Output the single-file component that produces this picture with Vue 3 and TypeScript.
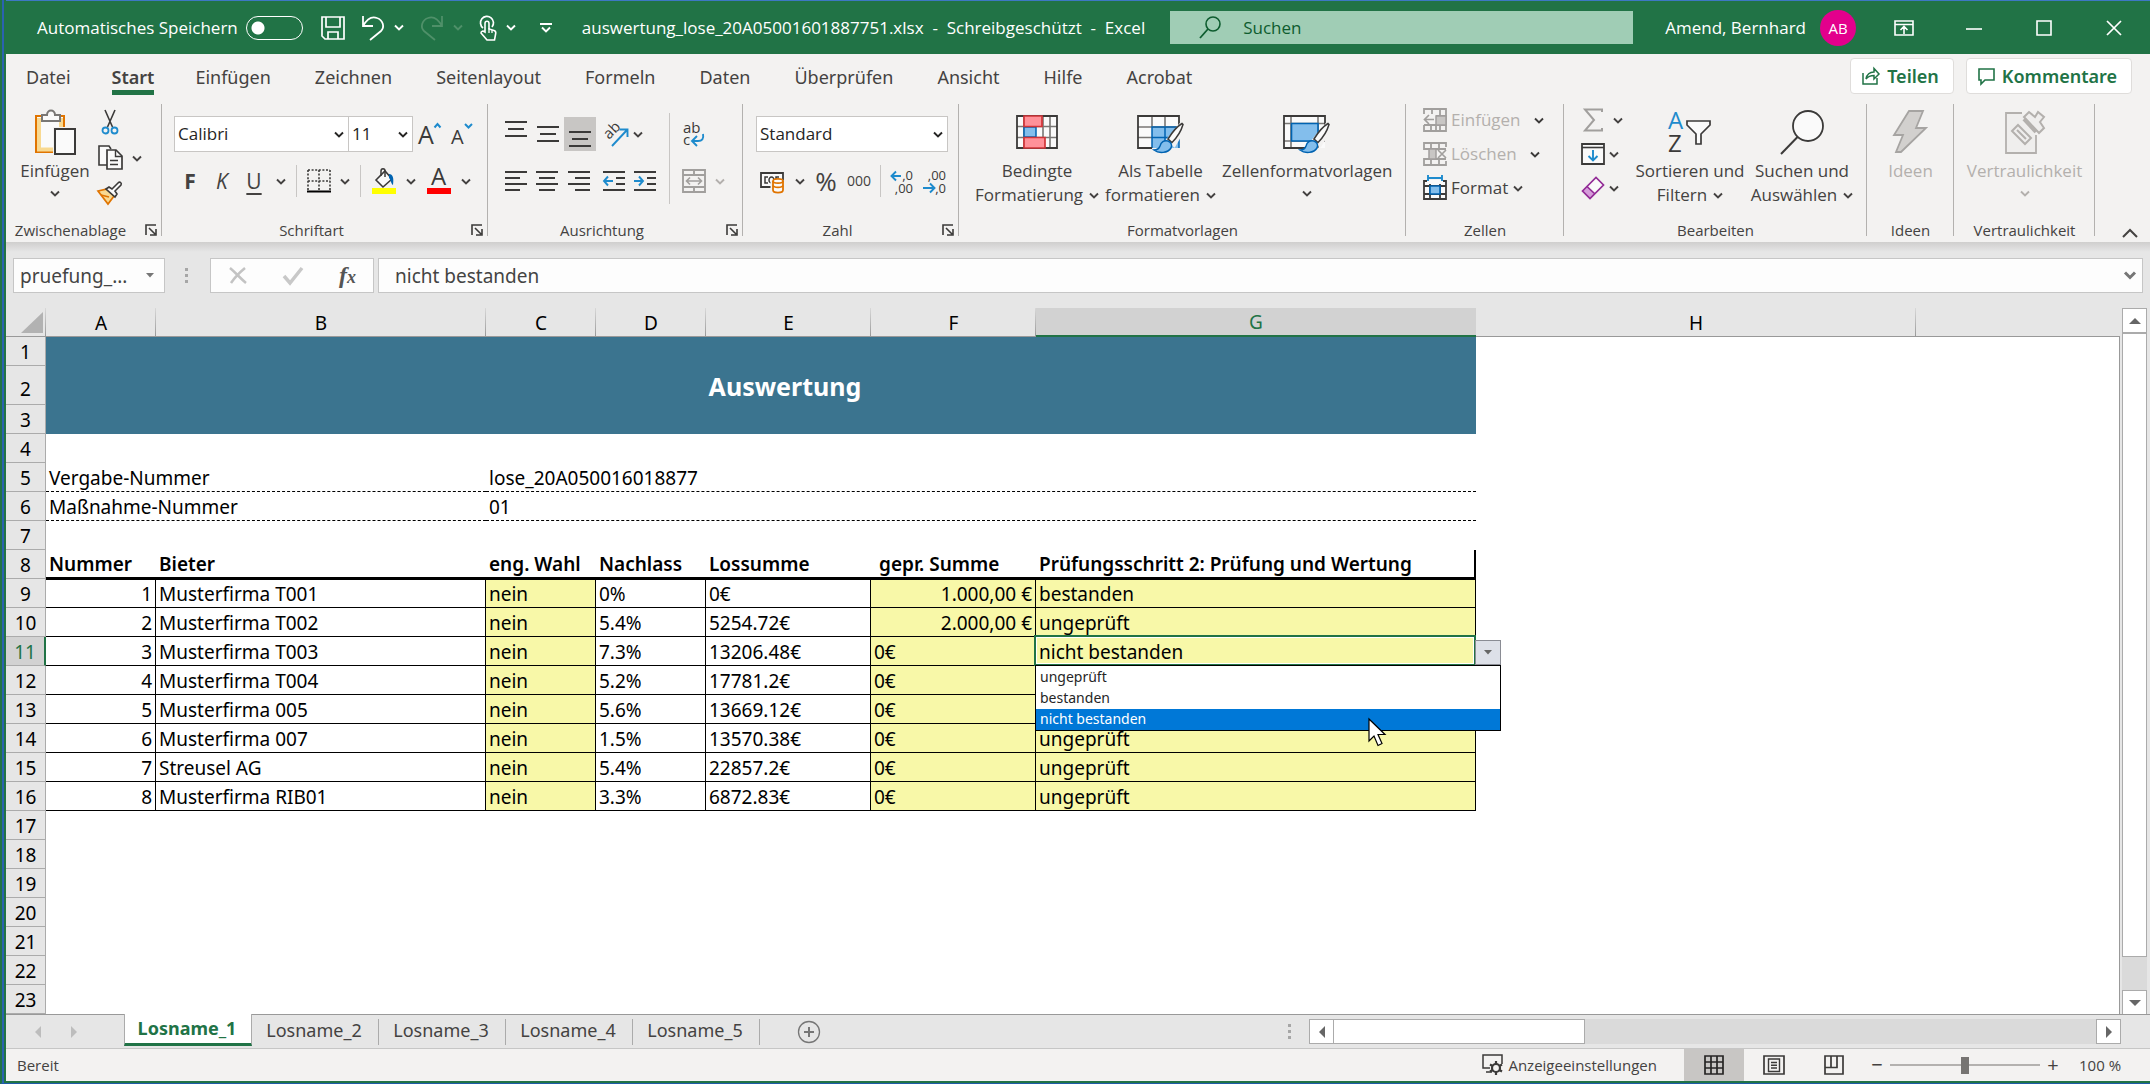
<script setup lang="ts">
import { h, ref, type FunctionalComponent } from 'vue'

type IconDef = [width: number, height: number, markup: string]

const brush = `
  <path d="M46 12L32 29l5 4 11-19z" fill="none" stroke="#f3f2f1" stroke-width="5"/>
  <path d="M45 12.500c-5 3-10 9-14 15.500l4 3.500c5-5 9-11 11-18z" fill="#fafafa" stroke="#3b3a39" stroke-width="1.500"/>
  <path d="M31 30c-4-1-7 1-8 5-1 3-3 4-6 4 5 4 14 3 17-2 1.500-3 0-6-3-7z" fill="#83beec" stroke="#0063b1" stroke-width="1.500"/>`

const icons: Record<string, IconDef> = {
  chevron: [10, 7, `<path d="M1 1.500l4 4 4-4" fill="none" stroke="currentColor" stroke-width="1.900"/>`],
  chevronUp: [16, 10, `<path d="M1 9l7-7 7 7" fill="none" stroke="currentColor" stroke-width="2"/>`],
  chevronBold: [12, 9, `<path d="M1 1.500l5 5 5-5" fill="none" stroke="currentColor" stroke-width="3"/>`],
  launcher: [12, 12, `<path d="M1 11V1h10M4 4l6 6M11 5v6H5" fill="none" stroke="#3b3a39" stroke-width="1.600"/>`],
  save: [24, 24, `<path d="M1 1h22v22H4l-3-3zM5 1v10h14V1M7 23v-7h10v7" fill="none" stroke="#fff" stroke-width="1.700"/>`],
  undo: [24, 26, `<path d="M2 1v10h10M2 11C6 4 11 1 16 3c6 2 8 9 4 13L9 25" fill="none" stroke="#fff" stroke-width="1.800"/>`],
  redo: [24, 26, `<path d="M22 1v10H12M22 11C18 4 13 1 8 3c-6 2-8 9-4 13l11 9" fill="none" stroke="#4f9069" stroke-width="1.800"/>`],
  touch: [18, 26, `<path d="M4 13A6.500 6.500 0 1 1 13 12" fill="none" stroke="#fff" stroke-width="1.700"/><path d="M6 17V8.500c0-3 4-3 4 0V14l5 1.500c1.500.5 2 1.500 1.700 3L15.500 25H8l-6-7c0-2 2-2.500 4-1z" fill="#217346" stroke="#fff" stroke-width="1.600"/><path d="M10 13v5M13 15v3" stroke="#fff" stroke-width="1.300"/>`],
  customize: [12, 10, `<path d="M0 1h12" stroke="#fff" stroke-width="2"/><path d="M2 4.500l4 4 4-4" fill="none" stroke="#fff" stroke-width="1.900"/>`],
  search: [22, 24, `<circle cx="14" cy="8" r="7" fill="none" stroke="#0e5c2f" stroke-width="1.600"/><path d="M9 13L1 22" stroke="#0e5c2f" stroke-width="1.800"/>`],
  ribbonOptions: [20, 16, `<path d="M1 1h18v14H1zM1 4.500h18M10 14V7M6.500 10L10 6.500l3.500 3.500" fill="none" stroke="#fff" stroke-width="1.600"/>`],
  minimize: [16, 16, `<path d="M0 9h16" stroke="#fff" stroke-width="1.600"/>`],
  maximize: [16, 16, `<path d="M1 1h14v14H1z" fill="none" stroke="#fff" stroke-width="1.600"/>`],
  close: [16, 16, `<path d="M1 1l14 14M15 1L1 15" stroke="#fff" stroke-width="1.700"/>`],
  share: [18, 18, `<path d="M1 6v11h14v-6M4 12c1-5 4-7 8-7V1.500L17 7l-5 5V8.500c-4 0-6 1-8 3.500z" fill="none" stroke="#217346" stroke-width="1.500"/>`],
  comment: [17, 17, `<path d="M1 1h15v11H7l-4 4v-4H1z" fill="none" stroke="#217346" stroke-width="1.600"/>`],
  paste: [44, 46, `<path d="M3 7h28v36H3z" fill="#fafafa" stroke="#e07400" stroke-width="2"/><path d="M6 9v31.500h22V9" fill="none" stroke="#f8d991" stroke-width="4"/><path d="M9 12V6h5c0-6 8-6 8 0h5v6z" fill="#fafafa" stroke="#797775" stroke-width="2"/><path d="M20 18h23v28H20z" fill="#f3f2f1"/><path d="M22 20h20v25H22z" fill="#fafafa" stroke="#3b3a39" stroke-width="2"/>`],
  cut: [18, 26, `<path d="M4 1l7.500 17M14 1L6.500 18" stroke="#3b3a39" stroke-width="1.600"/><circle cx="4.500" cy="21.500" r="3" fill="none" stroke="#1e8bcd" stroke-width="1.800"/><circle cx="13.500" cy="21.500" r="3" fill="none" stroke="#1e8bcd" stroke-width="1.800"/>`],
  copy: [26, 26, `<path d="M10 20H2V1h10l2 3" fill="#fafafa" stroke="#3b3a39" stroke-width="1.600"/><path d="M10 5h9l6 6v13H10z" fill="#fafafa" stroke="#3b3a39" stroke-width="1.700"/><path d="M18.500 5v6.500H25M13 15.500h8M13 19.500h8" fill="none" stroke="#3b3a39" stroke-width="1.400"/>`],
  painter: [26, 24, `<path d="M1 10l9-2 7 7-6 8z" fill="#f8d991" stroke="#e07400" stroke-width="1.700"/><path d="M4 14l8 2" stroke="#e07400" stroke-width="1.500"/><path d="M9 8l3-2 3 2 6-6c2-2 4 0 3 2l-6 6 2 3-2 3z" fill="#fafafa" stroke="#3b3a39" stroke-width="1.600"/>`],
  grow: [24, 26, `<text x="0" y="23" font-family="Open Sans, sans-serif" font-size="25" fill="#3b3a39">A</text><path d="M16.500 6.500l3-3.500 3 3.500" fill="none" stroke="#1e8bcd" stroke-width="2"/>`],
  shrink: [24, 26, `<text x="1" y="23" font-family="Open Sans, sans-serif" font-size="20" fill="#3b3a39">A</text><path d="M15 3l3.500 3.500L22 3" fill="none" stroke="#1e8bcd" stroke-width="2"/>`],
  borders: [24, 24, `<path d="M1 1h22M1 12h22M1 1v21M12 1v21M23 1v21" fill="none" stroke="#3b3a39" stroke-width="1.600" stroke-dasharray="2 1.600"/><path d="M0 22.500h24" stroke="#000" stroke-width="2"/>`],
  fill: [26, 26, `<path d="M5 12l9-9 7 8-9 8z" fill="#fafafa" stroke="#3b3a39" stroke-width="1.600"/><path d="M10 8V3c0-3 4-3 4 0v6" fill="none" stroke="#3b3a39" stroke-width="1.500"/><path d="M18 6c4 0 5 4 4 11-2-1-2-5-4-7z" fill="#0063b1"/><path d="M1 20h24v6H1z" fill="#ff0"/>`],
  fontColor: [26, 26, `<text x="5" y="17" font-family="Open Sans, sans-serif" font-size="24" fill="#3b3a39">A</text><path d="M1 20h24v6H1z" fill="red"/>`],
  top: [22, 20, `<path d="M0 3h22M3 10h16M0 17h22" stroke="#3b3a39" stroke-width="2"/>`],
  left: [22, 22, `<path d="M0 2h22M0 8h15M0 14h22M0 20h15" stroke="#3b3a39" stroke-width="1.800"/>`],
  center: [22, 22, `<path d="M0 2h22M3 8h16M0 14h22M3 20h16" stroke="#3b3a39" stroke-width="1.800"/>`],
  right: [22, 22, `<path d="M0 2h22M7 8h15M0 14h22M7 20h15" stroke="#3b3a39" stroke-width="1.800"/>`],
  outdent: [22, 22, `<path d="M0 2h22M13 8h9M13 14h9M0 20h22" stroke="#3b3a39" stroke-width="1.800"/><path d="M10 11H1M5 6.500L1 11l4 4.500" fill="none" stroke="#1e8bcd" stroke-width="1.900"/>`],
  indent: [22, 22, `<path d="M0 2h22M13 8h9M13 14h9M0 20h22" stroke="#3b3a39" stroke-width="1.800"/><path d="M0 11h9M5 6.500L9 11l-4 4.500" fill="none" stroke="#1e8bcd" stroke-width="1.900"/>`],
  orient: [26, 26, `<text transform="translate(6 19) rotate(-45)" font-family="Open Sans, sans-serif" font-size="15" fill="#3b3a39">ab</text><path d="M9 25L24 9M16.500 8.500H24.500V16" fill="none" stroke="#1e8bcd" stroke-width="1.900"/>`],
  wrap: [24, 28, `<text x="1" y="13" font-family="Open Sans, sans-serif" font-size="15" fill="#3b3a39">ab</text><text x="1" y="25" font-family="Open Sans, sans-serif" font-size="15" fill="#3b3a39">c</text><path d="M21 14c1 5-1 7-5 7h-5M15 16l-5 5 5 5" fill="none" stroke="#1e8bcd" stroke-width="1.900"/>`],
  merge: [24, 24, `<path d="M1 1h22v22H1zM1 6h22M1 18h22M12 1v5M12 18v5" fill="none" stroke="#a19f9d" stroke-width="1.900"/><path d="M4 12h16M8 8.500L4.500 12 8 15.500M16 8.500l3.500 3.500-3.500 3.500" fill="none" stroke="#a19f9d" stroke-width="1.600"/>`],
  money: [26, 26, `<path d="M1 5h22v14H1z" fill="#fafafa" stroke="#3b3a39" stroke-width="1.800"/><path d="M8 9H5v6h3M14 12a2.500 3 0 1 0-5 0 2.500 3 0 1 0 5 0M16 15V9h3" fill="none" stroke="#3b3a39" stroke-width="1.500"/><path d="M12 14h12v10H12z" fill="#fafafa" stroke="#f3f2f1" stroke-width="3"/><path d="M13 13v9c0 3.500 10 3.500 10 0v-9" fill="#fafafa" stroke="#e07400" stroke-width="1.800"/><ellipse cx="18" cy="13" rx="5" ry="2.200" fill="#fafafa" stroke="#e07400" stroke-width="1.700"/><path d="M13 17.500c1 2.500 9 2.500 10 0" fill="none" stroke="#e07400" stroke-width="1.700"/>`],
  moreDecimals: [24, 26, `<text x="23" y="12" text-anchor="end" font-family="Open Sans, sans-serif" font-size="13" fill="#3b3a39">,0</text><text x="23" y="25" text-anchor="end" font-family="Open Sans, sans-serif" font-size="13" fill="#3b3a39">,00</text><path d="M11 8H1M6 3.500L1.500 8 6 12.500" fill="none" stroke="#1e8bcd" stroke-width="1.900"/>`],
  lessDecimals: [24, 26, `<text x="23" y="12" text-anchor="end" font-family="Open Sans, sans-serif" font-size="13" fill="#3b3a39">,00</text><text x="23" y="25" text-anchor="end" font-family="Open Sans, sans-serif" font-size="13" fill="#3b3a39">,0</text><path d="M0 20h11M7 15.500l4.500 4.500L7 24.500" fill="none" stroke="#1e8bcd" stroke-width="1.900"/>`],
  conditional: [42, 42, `<path d="M1 5h40v32H1z" fill="#fafafa"/><path d="M1 15.500h40M1 26.500h40M8 5v32M27 5v32M34 5v32" stroke="#797775" stroke-width="1.600"/><path d="M1 5h40v32H1z" fill="none" stroke="#3b3a39" stroke-width="1.800"/><path d="M8 16h12v10H8z" fill="#83beec" stroke="#0063b1" stroke-width="1.500"/><path d="M8 5h18v10.500H8zM8 26.500h21V37H8z" fill="#ff9199" stroke="#d13438" stroke-width="1.700"/>`],
  tableFormat: [48, 42, `<path d="M1 5h41v32H1z" fill="#fafafa"/><path d="M15 16h27v21H15z" fill="#83beec"/><path d="M1 16h41M1 26.500h14M15 5v11M28 5v11" stroke="#797775" stroke-width="1.600"/><path d="M15 37V16h27v21M15 26.500h27M28 16v21" fill="none" stroke="#0063b1" stroke-width="1.500"/><path d="M15 37H1V5h41v11" fill="none" stroke="#3b3a39" stroke-width="1.800"/>${brush}`],
  cellFormat: [48, 42, `<path d="M1 5h41v32H1z" fill="#fafafa"/><path d="M1 12.500h41M1 30h41M8 5v32M35 5v32" stroke="#797775" stroke-width="1.600"/><path d="M22 37H1V5h41v9" fill="none" stroke="#3b3a39" stroke-width="1.800"/><path d="M8.500 12.500H35V30H8.500z" fill="#83beec" stroke="#0063b1" stroke-width="1.600"/>${brush}`],
  insertCells: [24, 24, `<path d="M6 1h17v22H1v-6M1 6V1h6M1 17h22M13 8h10M13 17v6M17 1v22M8 17v6M9 1v5" fill="none" stroke="#a19f9d" stroke-width="1.800"/><path d="M13 8h10v9H13z" fill="#c8c6c4" stroke="#a19f9d" stroke-width="1.500"/><path d="M11 11.500H2M6 7l-4.500 4.500L6 16" fill="none" stroke="#a19f9d" stroke-width="1.700"/>`],
  deleteCells: [24, 24, `<path d="M23 5V1H1v6h22M23 19v4H1v-6h22M8 1v6M16 1v6M8 17v6M16 17v6" fill="none" stroke="#a19f9d" stroke-width="1.800"/><path d="M6 7h7v10H6z" fill="#c8c6c4" stroke="#a19f9d" stroke-width="1.500"/><path d="M15 8l8 8M23 8l-8 8" stroke="#a19f9d" stroke-width="1.700"/>`],
  formatCells: [24, 26, `<path d="M1 5h22v19H1z" fill="#fafafa"/><path d="M4 6H1v18h22V6h-3M1 11h22M1 19h22M7 9v15M17 9v15" fill="none" stroke="#3b3a39" stroke-width="1.800"/><path d="M7 11h10v8H7z" fill="#83beec" stroke="#0063b1" stroke-width="1.600"/><path d="M5 3h14M5 0v6M19 0v6" stroke="#1e8bcd" stroke-width="1.900"/>`],
  sum: [24, 24, `<path d="M21 4V1.500H4L13 12 4 22.500h17V20" fill="none" stroke="#a19f9d" stroke-width="2"/>`],
  fillDown: [24, 24, `<path d="M1 2h22v20H1z" fill="#fafafa" stroke="#3b3a39" stroke-width="1.800"/><path d="M1 5.500h22" stroke="#3b3a39" stroke-width="1.600"/><path d="M12 8v10.500M7.500 14l4.500 4.500 4.500-4.500" fill="none" stroke="#1e8bcd" stroke-width="1.900"/>`],
  eraser: [24, 24, `<path d="M1 15L15 1l8 8L9 23z" fill="#fafafa"/><path d="M1 15l5-5 8 8-5 5z" fill="#d59dda"/><path d="M1.500 15L15 1.500l7.500 7.500L9 22.500zM6 10.500l8 7.500" fill="none" stroke="#922b96" stroke-width="1.700"/>`],
  sort: [44, 48, `<text x="0" y="21" font-family="Open Sans, sans-serif" font-size="24" fill="#1e8bcd">A</text><text x="0" y="44" font-family="Open Sans, sans-serif" font-size="24" fill="#3b3a39">Z</text><path d="M19 13h23v4L33 26v10h-5V26l-9-9z" fill="#fafafa" stroke="#3b3a39" stroke-width="1.700"/>`],
  find: [44, 48, `<circle cx="28" cy="18" r="15" fill="#fafafa" stroke="#3b3a39" stroke-width="1.800"/><path d="M17.500 29L1 46" stroke="#3b3a39" stroke-width="2"/>`],
  ideas: [34, 48, `<path d="M16 3h14l-7 17h10L8 44h-5l7-17H1z" fill="#d2d0ce" stroke="#a6a4a2" stroke-width="1.800"/>`],
  sensitivity: [42, 48, `<path d="M18 5H2v40h30V27" fill="#efeeed" stroke="#b3b0ad" stroke-width="1.800"/><path d="M8 23l6-6 13 13-6 6zM13 22l9 9" fill="#efeeed" stroke="#b3b0ad" stroke-width="2"/><path d="M20 9l5-5 6 5 3-5 6 5-4 5 4 6-5 5z" fill="#efeeed" stroke="#b3b0ad" stroke-width="2"/><path d="M20 11l12 13" stroke="#b3b0ad" stroke-width="4"/>`],
  cancel: [18, 18, `<path d="M1 1c6 5 10 10 16 15M16 1C10 6 6 10 2 16" fill="none" stroke="#c3c3c3" stroke-width="2.500"/>`],
  accept: [20, 18, `<path d="M1 9l6 7L19 1" fill="none" stroke="#c8c8c8" stroke-width="3.500"/>`],
  dots: [4, 16, `<path d="M0 0h3v3H0zM0 6h3v3H0zM0 12h3v3H0z" fill="#a6a6a6"/>`],
  corner: [22, 22, `<path d="M22 0v21H0z" fill="#b2b2b2"/>`],
  arrowLeft: [8, 12, `<path d="M7 0v12L1 6z" fill="currentColor"/>`],
  arrowRight: [8, 12, `<path d="M1 0v12l6-6z" fill="currentColor"/>`],
  arrowUp: [12, 8, `<path d="M0 7h12L6 1z" fill="currentColor"/>`],
  arrowDown: [12, 8, `<path d="M0 1h12L6 7z" fill="currentColor"/>`],
  arrowSmall: [8, 5, `<path d="M0 0h8L4 4.500z" fill="currentColor"/>`],
  addSheet: [24, 24, `<circle cx="12" cy="12" r="10.500" fill="none" stroke="#767676" stroke-width="1.300"/><path d="M12 7v10M7 12h10" stroke="#767676" stroke-width="2"/>`],
  display: [22, 22, `<path d="M8 14H1V1h19v9M4 18h6" fill="none" stroke="#3b3a39" stroke-width="1.500"/><circle cx="14" cy="14" r="4" fill="none" stroke="#3b3a39" stroke-width="2.200"/><path d="M14 7v3M14 18v3M8 10.500l3 1.700M17 15.700l3 1.800M8 17.500l3-1.800M17 12.200l3-1.700" stroke="#3b3a39" stroke-width="2.200"/>`],
  normalView: [20, 20, `<path d="M1 1h18v18H1zM1 7h18M1 13h18M7 1v18M13 1v18" fill="none" stroke="#262524" stroke-width="1.700"/>`],
  pageView: [22, 20, `<path d="M1 1h20v18H1z" fill="none" stroke="#3b3a39" stroke-width="1.700"/><path d="M5.500 4h11v12.500h-11zM8 7.500h6M8 10.300h6M8 13h6" fill="none" stroke="#3b3a39" stroke-width="1.400"/>`],
  breakView: [20, 20, `<path d="M1 1h18v18H1zM1 12.500h12V1M7 1v11" fill="none" stroke="#3b3a39" stroke-width="1.700"/>`],
  cursor: [20, 30, `<path d="M1 1v22l5-5 4 9.500 4-2-4-9h7z" fill="#fff" stroke="#000" stroke-width="1.200"/>`],
}

const Icon: FunctionalComponent<{ name: string }> = (props) => {
  const [width, height, markup] = icons[props.name]
  return h('svg', {
    class: 'icon',
    width,
    height,
    viewBox: `0 0 ${width} ${height}`,
    'aria-hidden': 'true',
    innerHTML: markup,
  })
}
Icon.props = ['name']

const docTitle = 'auswertung_lose_20A05001601887751.xlsx  -  Schreibgeschützt  -  Excel'
const ribbonTabs = ['Datei', 'Start', 'Einfügen', 'Zeichnen', 'Seitenlayout', 'Formeln', 'Daten', 'Überprüfen', 'Ansicht', 'Hilfe', 'Acrobat']
const activeTab = ref('Start')

const columns = ['A', 'B', 'C', 'D', 'E', 'F', 'G', 'H']
const statusOptions = ['ungeprüft', 'bestanden', 'nicht bestanden']
const picked = ref('nicht bestanden')

interface Bid {
  row: number
  name: string
  rebate: string
  total: string
  checked: string
  status: string
}

const bids: Bid[] = [
  { row: 9, name: 'Musterfirma T001', rebate: '0%', total: '0€', checked: '1.000,00 €', status: 'bestanden' },
  { row: 10, name: 'Musterfirma T002', rebate: '5.4%', total: '5254.72€', checked: '2.000,00 €', status: 'ungeprüft' },
  { row: 11, name: 'Musterfirma T003', rebate: '7.3%', total: '13206.48€', checked: '0€', status: 'nicht bestanden' },
  { row: 12, name: 'Musterfirma T004', rebate: '5.2%', total: '17781.2€', checked: '0€', status: 'ungeprüft' },
  { row: 13, name: 'Musterfirma 005', rebate: '5.6%', total: '13669.12€', checked: '0€', status: 'ungeprüft' },
  { row: 14, name: 'Musterfirma 007', rebate: '1.5%', total: '13570.38€', checked: '0€', status: 'ungeprüft' },
  { row: 15, name: 'Streusel AG', rebate: '5.4%', total: '22857.2€', checked: '0€', status: 'ungeprüft' },
  { row: 16, name: 'Musterfirma RIB01', rebate: '3.3%', total: '6872.83€', checked: '0€', status: 'ungeprüft' },
]
const emptyRows = [17, 18, 19, 20, 21, 22, 23]

const sheets = ['Losname_1', 'Losname_2', 'Losname_3', 'Losname_4', 'Losname_5']
const activeSheet = ref('Losname_1')
const zoom = ref(50)
</script>

<template>
  <div class="window">
    <header class="titlebar">
      <label class="autosave">Automatisches Speichern <input type="checkbox" class="toggle" /></label>
      <div class="quick">
        <button aria-label="Speichern"><Icon name="save" /></button>
        <button class="pair" aria-label="Rückgängig"><Icon name="undo" /><Icon name="chevron" /></button>
        <button class="pair dim" aria-label="Wiederholen"><Icon name="redo" /><Icon name="chevron" /></button>
        <button class="pair" aria-label="Fingereingabe"><Icon name="touch" /><Icon name="chevron" /></button>
        <button aria-label="Symbolleiste anpassen"><Icon name="customize" /></button>
      </div>
      <div class="doc-title">{{ docTitle }}</div>
      <label class="search"><Icon name="search" /><input type="search" placeholder="Suchen" aria-label="Suchen" /></label>
      <div class="user">Amend, Bernhard <span class="avatar">AB</span></div>
      <div class="window-buttons">
        <button aria-label="Menüband-Optionen"><Icon name="ribbonOptions" /></button>
        <button aria-label="Minimieren"><Icon name="minimize" /></button>
        <button aria-label="Maximieren"><Icon name="maximize" /></button>
        <button aria-label="Schließen"><Icon name="close" /></button>
      </div>
    </header>

    <nav class="tabs">
      <button v-for="tab in ribbonTabs" :key="tab" class="tab" :class="{ active: tab === activeTab }" @click="activeTab = tab">{{ tab }}</button>
      <div class="tab-actions">
        <button class="action"><Icon name="share" />Teilen</button>
        <button class="action"><Icon name="comment" />Kommentare</button>
      </div>
    </nav>

    <div class="ribbon">
      <section class="group clipboard">
        <div class="body">
          <button class="big"><Icon name="paste" /><span>Einfügen</span><Icon name="chevron" /></button>
          <div class="clip-col">
            <button aria-label="Ausschneiden"><Icon name="cut" /></button>
            <button class="pair" aria-label="Kopieren"><Icon name="copy" /><Icon name="chevron" /></button>
            <button aria-label="Format übertragen"><Icon name="painter" /></button>
          </div>
        </div>
        <footer class="with-launch">Zwischenablage<button class="launch" aria-label="Zwischenablage öffnen"><Icon name="launcher" /></button></footer>
      </section>

      <section class="group font">
        <div class="body rows">
          <div class="line">
            <span class="combo font-name"><select aria-label="Schriftart"><option>Calibri</option></select><Icon name="chevron" /></span>
            <span class="combo font-size"><select aria-label="Schriftgrad"><option>11</option></select><Icon name="chevron" /></span>
            <button class="grow" aria-label="Schrift vergrößern"><Icon name="grow" /></button>
            <button class="shrink" aria-label="Schrift verkleinern"><Icon name="shrink" /></button>
          </div>
          <div class="line styles">
            <button class="glyph bold">F</button>
            <button class="glyph italic">K</button>
            <button class="pair wide"><span class="glyph underline">U</span><Icon name="chevron" /></button>
            <i class="bar" />
            <button class="pair" aria-label="Rahmen"><Icon name="borders" /><Icon name="chevron" /></button>
            <i class="bar" />
            <button class="pair" aria-label="Füllfarbe"><Icon name="fill" /><Icon name="chevron" /></button>
            <button class="pair" aria-label="Schriftfarbe"><Icon name="fontColor" /><Icon name="chevron" /></button>
          </div>
        </div>
        <footer class="with-launch">Schriftart<button class="launch" aria-label="Schriftart öffnen"><Icon name="launcher" /></button></footer>
      </section>

      <section class="group align">
        <div class="body">
          <div class="rows align-rows">
            <div class="line">
              <button class="cell" aria-label="Oben"><Icon name="top" class="raised" /></button>
              <button class="cell" aria-label="Mitte"><Icon name="top" /></button>
              <button class="cell on" aria-label="Unten"><Icon name="top" class="lowered" /></button>
              <button class="pair orient" aria-label="Ausrichtung"><Icon name="orient" /><Icon name="chevron" /></button>
            </div>
            <div class="line">
              <button class="cell" aria-label="Linksbündig"><Icon name="left" /></button>
              <button class="cell" aria-label="Zentriert"><Icon name="center" /></button>
              <button class="cell" aria-label="Rechtsbündig"><Icon name="right" /></button>
              <button class="cell shift" aria-label="Einzug verkleinern"><Icon name="outdent" /></button>
              <button class="cell" aria-label="Einzug vergrößern"><Icon name="indent" /></button>
            </div>
          </div>
          <i class="tall-bar" />
          <div class="rows">
            <div class="line"><button aria-label="Textumbruch"><Icon name="wrap" /></button></div>
            <div class="line"><button class="pair faded" aria-label="Verbinden"><Icon name="merge" /><Icon name="chevron" /></button></div>
          </div>
        </div>
        <footer class="with-launch">Ausrichtung<button class="launch" aria-label="Ausrichtung öffnen"><Icon name="launcher" /></button></footer>
      </section>

      <section class="group number">
        <div class="body rows">
          <div class="line">
            <span class="combo format"><select aria-label="Zahlenformat"><option>Standard</option></select><Icon name="chevron" /></span>
          </div>
          <div class="line numbers">
            <button class="pair" aria-label="Buchhaltung"><Icon name="money" /><Icon name="chevron" /></button>
            <button class="percent">%</button>
            <button class="thousand">000</button>
            <i class="bar" />
            <button aria-label="Dezimalstelle hinzufügen"><Icon name="moreDecimals" /></button>
            <button aria-label="Dezimalstelle entfernen"><Icon name="lessDecimals" /></button>
          </div>
        </div>
        <footer class="with-launch">Zahl<button class="launch" aria-label="Zahl öffnen"><Icon name="launcher" /></button></footer>
      </section>

      <section class="group formats">
        <div class="body">
          <button class="big"><Icon name="conditional" /><span>Bedingte</span><span>Formatierung <Icon name="chevron" /></span></button>
          <button class="big"><Icon name="tableFormat" /><span>Als Tabelle</span><span>formatieren <Icon name="chevron" /></span></button>
          <button class="big"><Icon name="cellFormat" /><span>Zellenformatvorlagen</span><Icon name="chevron" /></button>
        </div>
        <footer>Formatvorlagen</footer>
      </section>

      <section class="group cells">
        <div class="body stack">
          <button class="small off"><Icon name="insertCells" />Einfügen<Icon name="chevron" class="far" /></button>
          <button class="small off"><Icon name="deleteCells" />Löschen<Icon name="chevron" class="far" /></button>
          <button class="small"><Icon name="formatCells" />Format<Icon name="chevron" /></button>
        </div>
        <footer>Zellen</footer>
      </section>

      <section class="group edit">
        <div class="body">
          <div class="stack">
            <button class="small sum" aria-label="Summe"><Icon name="sum" /><Icon name="chevron" /></button>
            <button class="small" aria-label="Ausfüllen"><Icon name="fillDown" /><Icon name="chevron" /></button>
            <button class="small" aria-label="Löschen"><Icon name="eraser" /><Icon name="chevron" /></button>
          </div>
          <button class="big"><Icon name="sort" /><span>Sortieren und</span><span>Filtern <Icon name="chevron" /></span></button>
          <button class="big"><Icon name="find" /><span>Suchen und</span><span>Auswählen <Icon name="chevron" /></span></button>
        </div>
        <footer>Bearbeiten</footer>
      </section>

      <section class="group ideas">
        <div class="body"><button class="big off"><Icon name="ideas" /><span>Ideen</span></button></div>
        <footer>Ideen</footer>
      </section>

      <section class="group secrecy">
        <div class="body"><button class="big off"><Icon name="sensitivity" /><span>Vertraulichkeit</span><Icon name="chevron" /></button></div>
        <footer>Vertraulichkeit</footer>
      </section>

      <button class="collapse" aria-label="Menüband reduzieren"><Icon name="chevronUp" /></button>
    </div>

    <div class="formula-bar">
      <div class="box name-box"><input value="pruefung_..." aria-label="Namenfeld" /><Icon name="arrowSmall" /></div>
      <Icon name="dots" class="grip" />
      <div class="box fx">
        <button aria-label="Abbrechen"><Icon name="cancel" /></button>
        <button aria-label="Eingeben"><Icon name="accept" /></button>
        <button class="fx-btn"><span>f</span><small>x</small></button>
      </div>
      <div class="box formula"><input :value="picked" aria-label="Bearbeitungsleiste" /><Icon name="chevronBold" /></div>
    </div>

    <div class="sheet-area">
      <div class="sheet">
        <table>
          <colgroup>
            <col class="w-head" /><col class="w-s" /><col class="w-b" /><col class="w-s" /><col class="w-s" />
            <col class="w-m" /><col class="w-m" /><col class="w-l" /><col class="w-l" /><col />
          </colgroup>
          <thead>
            <tr>
              <th class="corner"><Icon name="corner" /></th>
              <th v-for="c in columns" :key="c" :class="{ sel: c === 'G' }">{{ c }}</th>
              <th class="rest" />
            </tr>
          </thead>
          <tbody>
            <tr><th>1</th><td colspan="7" rowspan="3" class="heading">Auswertung</td><td colspan="2" /></tr>
            <tr class="high"><th>2</th><td colspan="2" /></tr>
            <tr><th>3</th><td colspan="2" /></tr>
            <tr><th>4</th><td colspan="9" /></tr>
            <tr class="meta"><th>5</th><td colspan="2">Vergabe-Nummer</td><td colspan="5">lose_20A050016018877</td><td colspan="2" /></tr>
            <tr class="meta"><th>6</th><td colspan="2">Maßnahme-Nummer</td><td colspan="5">01</td><td colspan="2" /></tr>
            <tr><th>7</th><td colspan="9" /></tr>
            <tr class="labels">
              <th>8</th><td>Nummer</td><td>Bieter</td><td>eng. Wahl</td><td>Nachlass</td><td>Lossumme</td>
              <td class="indent">gepr. Summe</td><td class="last">Prüfungsschritt 2: Prüfung und Wertung</td><td colspan="2" />
            </tr>
            <tr v-for="(bid, i) in bids" :key="bid.row" class="bid" :class="{ first: i === 0 }">
              <th :class="{ sel: bid.row === 11 }">{{ bid.row }}</th>
              <td class="num">{{ i + 1 }}</td>
              <td>{{ bid.name }}</td>
              <td class="mark">nein</td>
              <td>{{ bid.rebate }}</td>
              <td>{{ bid.total }}</td>
              <td class="mark" :class="{ num: i < 2 }">{{ bid.checked }}</td>
              <td v-if="bid.row === 11" class="mark current">
                {{ picked }}
                <button class="open" aria-label="Auswahl öffnen"><Icon name="arrowSmall" /></button>
                <select v-model="picked" class="list" size="3" aria-label="Prüfungsergebnis">
                  <option v-for="o in statusOptions" :key="o">{{ o }}</option>
                </select>
                <Icon name="cursor" class="cursor" />
              </td>
              <td v-else class="mark">{{ bid.status }}</td>
              <td colspan="2" class="free" />
            </tr>
            <tr v-for="n in emptyRows" :key="n"><th>{{ n }}</th><td colspan="9" /></tr>
          </tbody>
        </table>
      </div>
      <div class="vscroll">
        <button aria-label="Nach oben"><Icon name="arrowUp" /></button>
        <div class="vtrack"><div class="vthumb" /></div>
        <button aria-label="Nach unten"><Icon name="arrowDown" /></button>
      </div>
    </div>

    <div class="sheet-bar">
      <div class="sheet-nav"><Icon name="arrowLeft" /><Icon name="arrowRight" /></div>
      <button v-for="s in sheets" :key="s" class="sheet-tab" :class="{ active: s === activeSheet }" @click="activeSheet = s">{{ s }}</button>
      <button class="add" aria-label="Neues Blatt"><Icon name="addSheet" /></button>
      <Icon name="dots" class="splitter" />
      <div class="hscroll">
        <button aria-label="Nach links"><Icon name="arrowLeft" /></button>
        <div class="htrack"><div class="hthumb" /></div>
        <button aria-label="Nach rechts"><Icon name="arrowRight" /></button>
      </div>
    </div>

    <footer class="status">
      <span class="ready">Bereit</span>
      <button class="display"><Icon name="display" />Anzeigeeinstellungen</button>
      <button class="view on" aria-label="Normal"><Icon name="normalView" /></button>
      <button class="view" aria-label="Seitenlayout"><Icon name="pageView" /></button>
      <button class="view" aria-label="Umbruchvorschau"><Icon name="breakView" /></button>
      <button class="step">−</button>
      <input v-model="zoom" type="range" class="zoom" aria-label="Zoom" />
      <button class="step">+</button>
      <span class="percent-label">100 %</span>
    </footer>
  </div>
</template>

<style>
body {
  margin: 0;
  background: #fff;
}
</style>

<style scoped>
.window {
  --ink: #444241;
  --green: #217346;
  display: flex;
  flex-direction: column;
  min-height: 100vh;
  box-sizing: border-box;
  border-left: 2px solid var(--green);
  border-bottom: 1px solid #1f5ca8;
  box-shadow: inset 2px 0 #2b62b0, inset 4px 0 var(--green), inset 0 -2px var(--green);
  padding: 0 0 2px 4px;
  background: #e6e6e6;
  color: var(--ink);
  font: 17px/24px "Open Sans", "Noto Sans", sans-serif;
  overflow-x: hidden;
}
button {
  display: flex;
  align-items: center;
  justify-content: center;
  padding: 0;
  border: 0;
  background: none;
  color: inherit;
  font: inherit;
  white-space: nowrap;
}
.icon { display: block; flex: none; overflow: visible; }
input, select {
  box-sizing: border-box;
  border: 0;
  padding: 0;
  background: none;
  color: inherit;
  font: inherit;
  outline: 0;
}

/* title bar */
.titlebar {
  display: flex;
  align-items: center;
  height: 54px;
  box-sizing: border-box;
  padding: 0 1px 0 31px;
  border-top: 1px solid #3d78c4;
  background: var(--green);
  color: #fff;
}
.autosave { display: flex; align-items: center; gap: 8px; white-space: nowrap; }
.toggle {
  appearance: none;
  width: 57px;
  height: 24px;
  margin: 0;
  border: 1px solid #fff;
  border-radius: 12px;
  background: radial-gradient(circle at 11px 11px, #fff 6px, transparent 7px);
}
.quick { display: flex; align-items: center; gap: 16px; margin-left: 18px; }
.pair { gap: 9px; }
.dim { color: #4f9069; }
.quick > :last-child { margin-left: 8px; }
.doc-title { margin-left: 30px; white-space: pre; }
.search {
  display: flex;
  flex: 1;
  align-items: center;
  gap: 22px;
  height: 33px;
  margin-left: 25px;
  padding-left: 29px;
  background: #a0cdb5;
  color: #0e5c2f;
}
.search input { flex: 1; min-width: 0; appearance: none; }
.search input::placeholder { color: #0e5c2f; opacity: 1; }
.user { display: flex; align-items: center; gap: 14px; margin-left: 32px; white-space: nowrap; }
.avatar {
  width: 36px;
  height: 36px;
  border-radius: 50%;
  background: #e3008c;
  font-size: 15px;
  line-height: 36px;
  text-align: center;
}
.window-buttons { display: flex; margin-left: 13px; }
.window-buttons button { width: 70px; height: 40px; }

/* ribbon tabs */
.tabs {
  display: flex;
  align-items: center;
  gap: 44px;
  height: 50px;
  padding: 0 18px 0 20px;
  background: #f3f2f1;
  font: 18px/24px "Noto Sans", "Open Sans", sans-serif;
}
.tab { height: 32px; border-bottom: 5px solid transparent; }
.tab:nth-child(-n+2) { margin-right: -3px; }
.tab.active { border-color: var(--green); font-weight: 600; }
.tab-actions { display: flex; gap: 12px; margin-left: auto; }
.action {
  gap: 7px;
  height: 36px;
  padding: 0 14px 0 11px;
  border: 1px solid #dfdddb;
  border-radius: 4px;
  background: #fff;
  color: var(--green);
  font-weight: 600;
  margin-top: -6px;
}

/* ribbon groups */
.ribbon { display: flex; height: 138px; background: #f3f2f1; }
.group { position: relative; display: flex; flex: none; flex-direction: column; }
.group::after {
  content: "";
  position: absolute;
  top: 0;
  right: 0;
  bottom: 6px;
  width: 1px;
  background: #b3b1af;
}
.body { display: flex; box-sizing: border-box; height: 115px; }
.group footer { position: relative; font-size: 15px; line-height: 22px; text-align: center; }
.group .with-launch { padding-right: 27px; }
.launch { position: absolute; right: 5px; top: 5px; }
.clipboard { width: 156px; }
.font { width: 326px; }
.align { width: 255px; }
.number { width: 216px; }
.formats { width: 447px; }
.cells { width: 158px; }
.edit { width: 303px; }
.ideas { width: 87px; }
.secrecy { width: 141px; }
.big { flex-direction: column; justify-content: flex-start; padding-top: 4px; }
.big > .icon:first-child { height: 48px; margin-bottom: 3px; }
.big > span { display: flex; align-items: center; gap: 6px; }
.big > .icon:last-child { margin-top: 7px; }
.off { color: #b3b0ad; }
.clipboard .big { width: 98px; }
.clip-col { display: flex; flex-direction: column; align-items: flex-start; gap: 10px; padding-top: 5px; margin-left: -7px; }
.clip-col button:first-child { margin-left: 4px; }
.rows { display: flex; flex-direction: column; gap: 11px; padding-top: 12px; }
.line { display: flex; align-items: center; height: 36px; }
.combo { display: flex; position: relative; align-items: center; box-sizing: border-box; height: 36px; border: 1px solid #c8c6c4; background: #fff; color: #262524; }
.combo select { appearance: none; width: 100%; height: 34px; padding-left: 3px; }
.combo .icon { position: absolute; right: 4px; pointer-events: none; }
.font .body { padding-left: 12px; }
.font-name { width: 175px; }
.font-size { width: 64px; border-left: 0; }
.grow { margin-left: 5px; }
.shrink { margin-left: 8px; }
.styles { padding-left: 7px; gap: 10px; }
.glyph { width: 18px; font-size: 21px; }
.bold { font-weight: 700; }
.italic { margin-left: 4px; font-style: italic; }
.underline { text-decoration: underline; text-underline-offset: 4px; }
.wide { margin-left: 4px; gap: 13px; }
.bar { width: 1px; height: 32px; background: #c8c6c4; }
.align .body { padding-left: 12px; }
.cell { width: 32px; height: 34px; }
.on { background: #c8c6c4; }
.raised { margin-bottom: 10px; }
.lowered { margin-top: 10px; }
.shift { margin-left: 3px; }
.orient { margin-left: 7px; gap: 4px; }
.tall-bar { flex: none; width: 1px; height: 91px; margin: 9px 12px 0 8px; background: #c8c6c4; }
.align-rows { flex: none; width: 161px; }
.faded { color: #b3b0ad; }
.number .body { padding-left: 13px; }
.format { width: 192px; }
.numbers { gap: 9px; padding-left: 4px; }
.percent { width: 24px; font-size: 26px; }
.thousand { width: 24px; font-size: 14px; }
.formats .body { gap: 6px; padding-left: 16px; }
.stack { display: flex; flex-direction: column; gap: 8px; padding-top: 3px; }
.small { height: 26px; justify-content: flex-start; gap: 5px; }
.small .icon:first-child { margin-right: -1px; }
.small.sum { gap: 9px; }
.far { margin-left: 8px; }
.off .icon.far { color: #3b3a39; }
.cells .body { padding-left: 17px; }
.edit .body { padding-left: 17px; }
.edit .stack { width: 54px; }
.edit .big { width: 110px; margin-right: 2px; }
.ideas .body, .secrecy .body { justify-content: center; }
.collapse { margin: 124px 12px 4px auto; height: 10px; }

/* formula bar */
.formula-bar {
  display: flex;
  box-sizing: border-box;
  height: 51px;
  padding: 16px 7px 0;
  background: linear-gradient(#cfcecd, #e6e6e6 10px);
  font: 19px/24px "Noto Sans", "Open Sans", sans-serif;
}
.box { display: flex; align-items: center; box-sizing: border-box; height: 35px; border: 1px solid #c6c6c6; background: #fdfdfd; }
.name-box { width: 152px; padding: 0 10px 0 6px; color: #767676; }
.name-box input { flex: 1; min-width: 0; color: #444; }
.grip { margin: 10px 21px 0 20px; }
.fx { width: 164px; justify-content: space-between; padding: 0 17px 0 18px; }
.fx-btn { align-items: baseline; color: #555; font: italic bold 24px/30px "Liberation Serif", serif; }
.fx-btn small { font-size: 18px; }
.formula { flex: 1; margin-left: 4px; padding: 0 6px 0 16px; color: #767676; }
.formula input { flex: 1; color: #444; }

/* worksheet */
.sheet-area { display: flex; padding-top: 15px; padding-right: 3px; gap: 2px; }
.sheet { flex: 1; min-width: 0; }
table {
  width: 100%;
  table-layout: fixed;
  border-collapse: separate;
  border-spacing: 0;
  background: #fff;
  color: #000;
  font: 19px/24px "Noto Sans", "Open Sans", sans-serif;
}
.w-head { width: 40px; }
.w-s { width: 110px; }
.w-b { width: 330px; }
.w-m { width: 165px; }
.w-l { width: 440px; }
th, td { box-sizing: border-box; height: 29px; padding: 0; }
th {
  padding-top: 1px;
  border-right: 1px solid #ababab;
  border-bottom: 1px solid #ababab;
  background: #e6e6e6;
  font-weight: 400;
}
thead th { border-bottom-color: #999; border-right: 0; background: linear-gradient(#d8d8d8, #999) right / 1px 100% no-repeat #e6e6e6; }
thead th.rest { background: #e6e6e6; }
thead th.sel { border-bottom: 2px solid var(--green); background: #d2d2d2; color: var(--green); }
tbody th.sel { border-right: 2px solid var(--green); background: #d2d2d2; color: var(--green); }
.corner .icon { margin-left: 15px; }
.high > * { height: 39px; padding-bottom: 3px; vertical-align: bottom; }
td { padding: 1px 2px 0 3px; white-space: nowrap; }
tr td:last-child { border-right: 1px solid #999; }
td.heading { padding-left: 50px; background: #3b748f; color: #fff; font-size: 25px; font-weight: 700; text-align: center; }
.meta td:not(:last-child) { border-bottom: 1px dashed #000; }
.labels td { font-weight: 600; }
.labels td:not(:last-child) { border-bottom: 2px solid #000; }
.labels .last { border-right: 2px solid #000; }
.labels .indent { padding-left: 8px; }
.bid td { border-right: 1px solid #000; border-bottom: 1px solid #000; }
.bid .free { border-bottom: 0; }
.bid.first td:not(.free) { border-top: 1px solid #000; padding-top: 0; }
.mark { background: #f8f8a8; }
.num { padding-right: 3px; text-align: right; }
.current { position: relative; }
.current::before {
  content: "";
  position: absolute;
  inset: -2px -1px -1px -2px;
  border: 2px solid var(--green);
  box-shadow: inset 0 0 0 1px #fff;
}
.open {
  position: absolute;
  left: 100%;
  top: 3px;
  width: 26px;
  height: 25px;
  border: 1px solid #8a8c94;
  background: #dde0e8;
  color: #666;
}
.list {
  position: absolute;
  left: -1px;
  top: 28px;
  z-index: 1;
  width: 466px;
  height: 66px;
  padding-top: 1px;
  border: 1px solid #000;
  border-radius: 0;
  background: #fff;
  color: #262626;
  font: 14px/21px "Noto Sans", "Open Sans", sans-serif;
  overflow: hidden;
}
.list option { height: 21px; min-height: 21px; padding: 0 0 0 4px; line-height: 21px; }
.list option:checked { background: linear-gradient(#0078d7, #0078d7); color: #fff; }
.cursor { position: absolute; left: 332px; top: 81px; z-index: 2; }

/* scroll bars */
.vscroll { display: flex; flex-direction: column; width: 25px; margin-bottom: -1px; }
.vscroll button, .hscroll button { box-sizing: border-box; width: 25px; height: 25px; border: 1px solid #ababab; background: #fff; color: #666; }
.vtrack { flex: 1; background: #dadada; }
.vthumb { box-sizing: border-box; height: 95%; border: 1px solid #ababab; background: #fff; }

/* sheet tabs */
.sheet-bar {
  display: flex;
  align-items: center;
  box-sizing: border-box;
  height: 35px;
  border-top: 1px solid #999;
  border-bottom: 1px solid #c6c6c6;
  font: 18px/24px "Noto Sans", "Open Sans", sans-serif;
}
.sheet-nav { display: flex; gap: 28px; width: 118px; padding-left: 28px; box-sizing: border-box; color: #bdbdbd; }
.sheet-tab { box-sizing: border-box; width: 127px; height: 26px; padding: 0 2px 4px 0; border-right: 1px solid #ababab; }
.sheet-tab.active { width: 128px; height: 32px; margin-top: -3px; padding-bottom: 2px; border-left: 1px solid #ababab; border-bottom: 3px solid var(--green); background: #fff; color: var(--green); font-weight: 700; }
.add { margin-left: 37px; }
.splitter { margin-left: auto; }
.hscroll { display: flex; width: 38%; max-width: 812px; margin: 0 29px 0 17px; }
.htrack { flex: 1; background: #dadada; }
.hthumb { box-sizing: border-box; width: 33%; height: 25px; border: 1px solid #ababab; border-left: 0; background: #fff; }

/* status bar */
.status { display: flex; align-items: center; height: 32px; padding-left: 11px; background: #f3f2f1; font-size: 15px; }
.display { gap: 4px; margin: 0 27px 0 auto; }
.view { width: 60px; height: 32px; }
.step { width: 16px; margin: 0 5px; font-size: 20px; }
.zoom { appearance: none; width: 150px; height: 18px; margin: 0; background: linear-gradient(#b3b1af, #b3b1af) center / 100% 2px no-repeat; }
.zoom::-webkit-slider-thumb { appearance: none; width: 8px; height: 17px; background: #767472; }
.percent-label { width: 84px; padding-left: 13px; box-sizing: border-box; white-space: nowrap; }
</style>
